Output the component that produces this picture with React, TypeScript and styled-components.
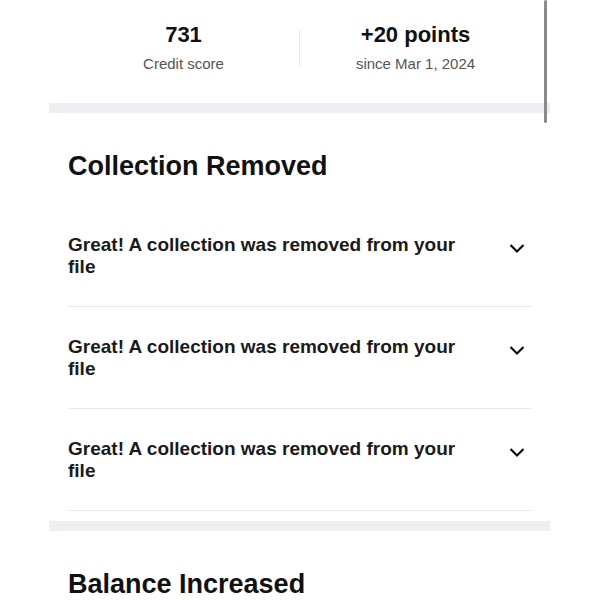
import styled, { createGlobalStyle } from "styled-components";

const GlobalStyle = createGlobalStyle`
  html, body {
    margin: 0;
    padding: 0;
    background: #ffffff;
  }
  body {
    font-family: "Liberation Sans", Arial, sans-serif;
    color: #1a1a1a;
  }
`;

const Viewport = styled.div`
  position: relative;
  width: 600px;
  height: 600px;
  overflow: hidden;
`;

const Page = styled.main`
  width: 501px;
  margin-left: 49px;
`;

// top summary with two stats
const Stats = styled.section`
  display: grid;
  grid-template-columns: 1fr 1px 1fr;
  align-items: start;
  height: 103px;
  padding: 22px 19px 0;
  box-sizing: border-box;
`;

const Stat = styled.div`
  display: flex;
  flex-direction: column;
  align-items: center;
`;

const StatValue = styled.div`
  font-size: 22px;
  font-weight: 700;
  line-height: 26px;
  color: #111;
`;

const StatLabel = styled.div`
  margin-top: 7px;
  font-size: 15px;
  line-height: 18px;
  color: #555;
`;

const StatDivider = styled.div`
  width: 1px;
  height: 37px;
  margin-top: 8px;
  background: #e6e6e6;
`;

const Band = styled.div`
  height: 10px;
  background: #edf0f3;
`;

const Section = styled.section`
  padding: 37px 19px 10px;
`;

const SectionTitle = styled.h2`
  margin: 0 0 23px;
  font-size: 27px;
  line-height: 32px;
  font-weight: 700;
  color: #111;
`;

const Row = styled.div`
  display: flex;
  justify-content: space-between;
  align-items: flex-start;
  padding: 29px 0 28px;
  border-bottom: 1px solid #e8e8e8;
`;

const RowText = styled.div`
  max-width: 400px;
  font-size: 19px;
  line-height: 22px;
  font-weight: 700;
  color: #1a1a1a;
`;

const Chevron = styled.svg`
  flex: none;
  width: 24px;
  height: 24px;
  margin: 2px 2px 0 0;
`;

const Scrollbar = styled.div`
  position: absolute;
  top: 0;
  left: 544px;
  width: 3px;
  height: 123px;
  border-radius: 2px;
  background: #8a8a8a;
`;

const ChevronDown = () => (
  <Chevron viewBox="0 0 24 24" fill="none">
    <path d="M5.5 9 L12 15.5 L18.5 9" stroke="#111" strokeWidth="2.2" />
  </Chevron>
);

const rows = [
  "Great! A collection was removed from your file",
  "Great! A collection was removed from your file",
  "Great! A collection was removed from your file",
];

export default function App() {
  return (
    <Viewport>
      <GlobalStyle />
      <Page>
        <Stats>
          <Stat>
            <StatValue>731</StatValue>
            <StatLabel>Credit score</StatLabel>
          </Stat>
          <StatDivider />
          <Stat>
            <StatValue>+20 points</StatValue>
            <StatLabel>since Mar 1, 2024</StatLabel>
          </Stat>
        </Stats>
        <Band />
        <Section>
          <SectionTitle>Collection Removed</SectionTitle>
          {rows.map((text, i) => (
            <Row key={i}>
              <RowText>{text}</RowText>
              <ChevronDown />
            </Row>
          ))}
        </Section>
        <Band />
        <Section>
          <SectionTitle>Balance Increased</SectionTitle>
        </Section>
      </Page>
      <Scrollbar />
    </Viewport>
  );
}
